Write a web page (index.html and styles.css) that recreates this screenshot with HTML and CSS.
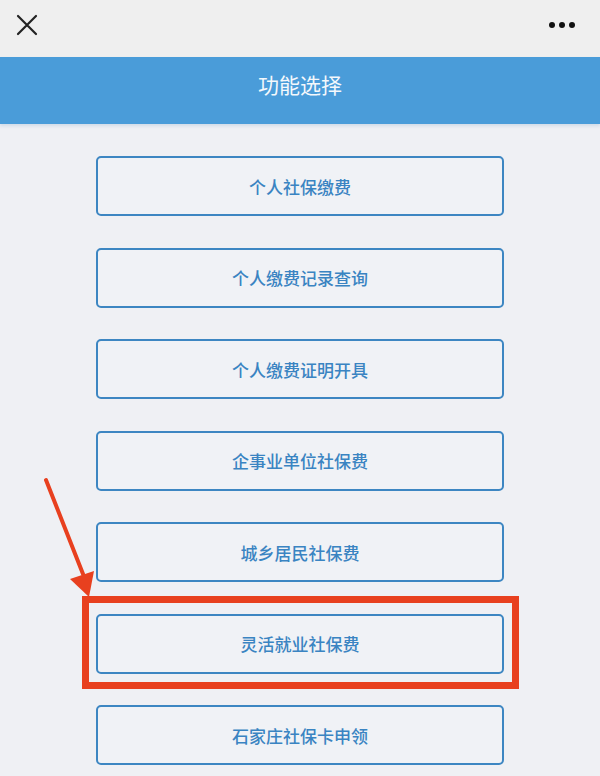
FILE: index.html
```html
<!DOCTYPE html>
<html lang="zh-CN">
<head>
<meta charset="utf-8">
<title>功能选择</title>
<link rel="stylesheet" href="styles.css">
</head>
<body>
<div class="topbar">
  <svg class="icon-close" width="22" height="22" viewBox="0 0 22 22"><path d="M2 2 L20 20 M20 2 L2 20" stroke="#222" stroke-width="2.2" stroke-linecap="round" fill="none"/></svg>
  <svg class="icon-more" width="28" height="8" viewBox="0 0 28 8"><circle cx="4" cy="4" r="3" fill="#111"/><circle cx="14" cy="4" r="3" fill="#111"/><circle cx="24" cy="4" r="3" fill="#111"/></svg>
</div>
<div class="header">功能选择</div>
<div class="list">
  <div class="btn">个人社保缴费</div>
  <div class="btn">个人缴费记录查询</div>
  <div class="btn">个人缴费证明开具</div>
  <div class="btn">企事业单位社保费</div>
  <div class="btn">城乡居民社保费</div>
  <div class="btn highlighted">灵活就业社保费
    <svg class="arrow" width="60" height="130" viewBox="0 0 60 130"><path d="M8 8 L45 102" stroke="#e8401f" stroke-width="4" stroke-linecap="round" fill="none"/><path d="M32 107 L56 99 L51 125 Z" fill="#e8401f"/></svg>
  </div>
  <div class="btn">石家庄社保卡申领</div>
</div>
</body>
</html>
```
FILE: styles.css
```css
html, body {
  margin: 0;
  padding: 0;
}
body {
  background: #eff0f4;
  font-family: "Noto Sans CJK SC", "Noto Sans", sans-serif;
  width: 600px;
  height: 776px;
  overflow: hidden;
}
.topbar {
  height: 57px;
  background: #efefef;
  display: flex;
  align-items: center;
  justify-content: space-between;
  padding: 0 24px 0 16px;
}
.icon-close { display: block; margin-top: -8px; }
.icon-more { display: block; margin-top: -8px; }
.header {
  height: 67px;
  background: #4a9cd9;
  color: #f4f8fc;
  font-size: 21px;
  display: flex;
  align-items: center;
  justify-content: center;
  padding-bottom: 14px;
  box-sizing: border-box;
  box-shadow: 0 2px 3px rgba(120,160,200,0.25);
}
.list {
  display: flex;
  flex-direction: column;
  align-items: center;
  gap: 31.5px;
  padding-top: 32px;
}
.btn {
  width: 408px;
  height: 60px;
  box-sizing: border-box;
  border: 2px solid #3d86c2;
  border-radius: 5px;
  background: #f0f2f6;
  color: #3a84c2;
  font-size: 17px;
  font-weight: 500;
  display: flex;
  align-items: center;
  justify-content: center;
  flex-shrink: 0;
}
.highlighted {
  position: relative;
}
.highlighted::before {
  content: "";
  position: absolute;
  left: -16px;
  right: -17px;
  top: -20px;
  bottom: -17px;
  border: 7px solid #e8401f;
  pointer-events: none;
}
.arrow {
  position: absolute;
  left: -60px;
  top: -144px;
}
```
